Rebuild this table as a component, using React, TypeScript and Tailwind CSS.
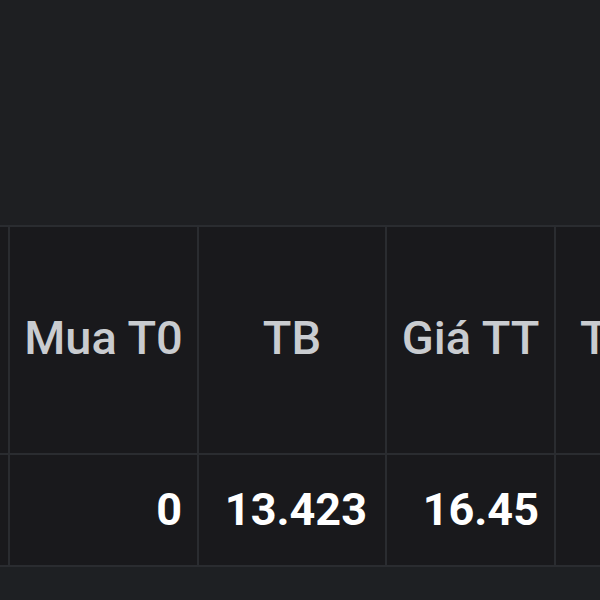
import React from "react";

const cols = "grid grid-cols-[10px_189px_188px_169px_1fr]";

export default function App() {
  return (
    <div className="w-[600px] h-[600px] overflow-hidden bg-[#1e1f22] flex flex-col" style={{ fontFamily: "Roboto, 'Liberation Sans', sans-serif" }}>
      <div className="h-[225px] shrink-0 bg-[#1e1f22]" />
      <div className={`${cols} h-[230px] shrink-0 border-t-2 border-[#2a2c30] bg-[#19191c]`}>
        <div className="border-r-2 border-b-2 border-[#2a2c30]" />
        <div className="border-r-2 border-b-2 border-[#2a2c30] flex items-center justify-center pb-[4px] text-[47px] font-medium text-[#c9ccd0] whitespace-nowrap">Mua T0</div>
        <div className="border-r-2 border-b-2 border-[#2a2c30] flex items-center justify-center pb-[4px] text-[47px] font-medium text-[#c9ccd0] whitespace-nowrap">TB</div>
        <div className="border-r-2 border-b-2 border-[#2a2c30] flex items-center justify-center pb-[4px] text-[47px] font-medium text-[#c9ccd0] whitespace-nowrap">Giá TT</div>
        <div className="border-b-2 border-[#2a2c30] flex items-center pl-[24px] pb-[4px] text-[47px] font-medium text-[#c9ccd0] whitespace-nowrap overflow-hidden">TT</div>
      </div>
      <div className={`${cols} h-[112px] shrink-0 bg-[#19191c]`}>
        <div className="border-r-2 border-b-2 border-[#2a2c30]" />
        <div className="border-r-2 border-b-2 border-[#2a2c30] flex items-center justify-end pr-[15px] text-[45px] font-bold text-white">0</div>
        <div className="border-r-2 border-b-2 border-[#2a2c30] flex items-center justify-end pr-[18px] text-[45px] font-bold text-white">13.423</div>
        <div className="border-r-2 border-b-2 border-[#2a2c30] flex items-center justify-end pr-[15px] text-[45px] font-bold text-white">16.45</div>
        <div className="border-b-2 border-[#2a2c30]" />
      </div>
      <div className="flex-1 bg-[#1e2023]" />
    </div>
  );
}
